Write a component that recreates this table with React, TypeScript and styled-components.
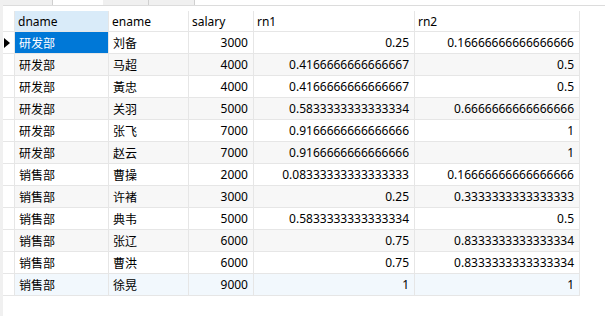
import { styled, createGlobalStyle } from "styled-components";

const GlobalStyle = createGlobalStyle`
  html, body {
    margin: 0;
    padding: 0;
    background: #ffffff;
  }
  body {
    font-family: "Noto Sans", "Noto Sans CJK SC", sans-serif;
    font-size: 12px;
    color: #000000;
  }
`;

const Page = styled.div`
  width: 605px;
  height: 316px;
  display: flex;
  flex-direction: column;
  overflow: hidden;
  border-left: 3px solid #f0f0f0;
  box-sizing: border-box;
`;

const TabStrip = styled.div`
  display: flex;
  height: 5px;
  border-bottom: 1px solid #dcdcdc;
  margin-left: -3px;
  margin-bottom: 5px;
`;

const Tab = styled.div<{ $w: number; $filled?: boolean }>`
  width: ${(p) => p.$w}px;
  height: 5px;
  box-sizing: border-box;
  background: ${(p) => (p.$filled ? "#f0f0f0" : "transparent")};
  border-right: ${(p) => (p.$filled ? "1px solid #d0d0d0" : "none")};
`;

const Grid = styled.div`
  display: grid;
  grid-template-columns: 12px 94px 80px 65px 161px 165px;
  grid-auto-rows: 22px;
  grid-template-rows: 21px;
  width: 577px;
`;

const Cell = styled.div<{ $right?: boolean; $bg?: string; $sel?: boolean }>`
  box-sizing: border-box;
  border-right: 1px solid #e6e6e6;
  border-bottom: 1px solid #e6e6e6;
  padding: 0 5px 0 4px;
  display: flex;
  align-items: center;
  justify-content: ${(p) => (p.$right ? "flex-end" : "flex-start")};
  background: ${(p) => (p.$sel ? "#0078d7" : p.$bg || "#ffffff")};
  color: ${(p) => (p.$sel ? "#ffffff" : "#000000")};
  white-space: nowrap;
  overflow: hidden;
`;

const HeadCell = styled(Cell)<{ $active?: boolean }>`
  background: ${(p) => (p.$active ? "#d9ebf9" : "#ffffff")};
  padding-left: 3px;
`;

const Indicator = styled.div<{ $bg?: string }>`
  box-sizing: border-box;
  border-right: 1px solid #e6e6e6;
  border-bottom: 1px solid #e6e6e6;
  background: #ffffff;
  display: flex;
  align-items: center;
  padding-left: 1px;
`;

const Arrow = styled.div`
  width: 0;
  height: 0;
  border-top: 5px solid transparent;
  border-bottom: 5px solid transparent;
  border-left: 6px solid #000000;
`;

const rows: [string, string, number, string, string][] = [
  ["研发部", "刘备", 3000, "0.25", "0.16666666666666666"],
  ["研发部", "马超", 4000, "0.4166666666666667", "0.5"],
  ["研发部", "黃忠", 4000, "0.4166666666666667", "0.5"],
  ["研发部", "关羽", 5000, "0.5833333333333334", "0.6666666666666666"],
  ["研发部", "张飞", 7000, "0.9166666666666666", "1"],
  ["研发部", "赵云", 7000, "0.9166666666666666", "1"],
  ["销售部", "曹操", 2000, "0.08333333333333333", "0.16666666666666666"],
  ["销售部", "许褚", 3000, "0.25", "0.3333333333333333"],
  ["销售部", "典韦", 5000, "0.5833333333333334", "0.5"],
  ["销售部", "张辽", 6000, "0.75", "0.8333333333333334"],
  ["销售部", "曹洪", 6000, "0.75", "0.8333333333333334"],
  ["销售部", "徐晃", 9000, "1", "1"],
];

function rowBg(i: number) {
  if (i === rows.length - 1) return "#f2f8fd";
  return i % 2 === 0 ? "#ffffff" : "#f7f7f7";
}

export default function App() {
  return (
    <>
      <GlobalStyle />
      <Page>
        <TabStrip>
          <Tab $w={53} $filled />
          <Tab $w={50} />
          <Tab $w={46} $filled />
          <Tab $w={46} $filled />
        </TabStrip>
        <Grid>
          <Indicator />
          <HeadCell $active>dname</HeadCell>
          <HeadCell>ename</HeadCell>
          <HeadCell>salary</HeadCell>
          <HeadCell>rn1</HeadCell>
          <HeadCell>rn2</HeadCell>
          {rows.map((r, i) => {
            const bg = rowBg(i);
            return [
              <Indicator key={`i${i}`}>{i === 0 && <Arrow />}</Indicator>,
              <Cell key={`d${i}`} $bg={bg} $sel={i === 0}>
                {r[0]}
              </Cell>,
              <Cell key={`e${i}`} $bg={bg}>
                {r[1]}
              </Cell>,
              <Cell key={`s${i}`} $bg={bg} $right>
                {r[2]}
              </Cell>,
              <Cell key={`a${i}`} $bg={bg} $right>
                {r[3]}
              </Cell>,
              <Cell key={`b${i}`} $bg={bg} $right>
                {r[4]}
              </Cell>,
            ];
          })}
        </Grid>
      </Page>
    </>
  );
}
